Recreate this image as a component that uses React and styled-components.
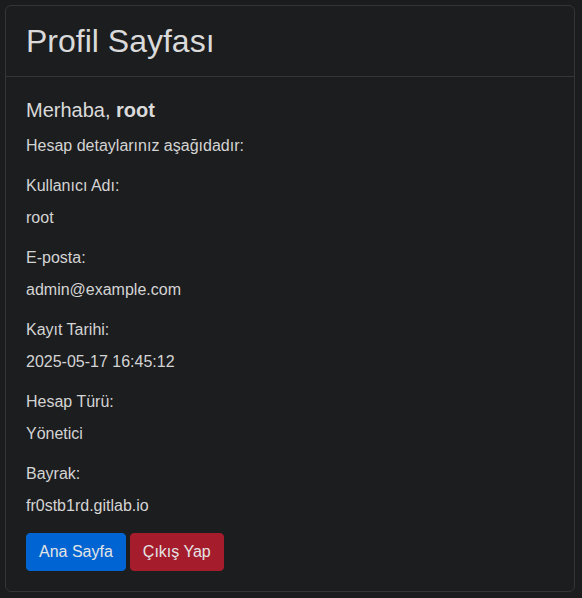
import React from 'react';
import styled, { createGlobalStyle } from 'styled-components';

const GlobalStyle = createGlobalStyle`
    * { box-sizing: border-box; }
    body {
        margin: 0;
        background: #1b1c1e;
        color: #d4d4d4;
        font-family: "Liberation Sans", Arial, sans-serif;
        font-size: 16px;
        line-height: 1.5;
    }
`;

const Card = styled.div`
    margin: 5px;
    width: 570px;
    background: #1c1d1f;
    border: 1px solid #333538;
    border-radius: 6px;
`;

const CardHeader = styled.div`
    padding: 16px 20px;
    border-bottom: 1px solid #333538;

    h1 {
        margin: 0;
        font-size: 32px;
        font-weight: 400;
        line-height: 1.2;
        color: #dadada;
    }
`;

const CardBody = styled.div`
    padding: 21px 20px 20px;
`;

const Greeting = styled.h4`
    margin: 0 0 12px;
    font-size: 20px;
    font-weight: 400;
    line-height: 1.2;
    color: #dadada;
`;

const Text = styled.p`
    margin: 0 0 ${(p) => (p.$tight ? '8px' : '16px')};
`;

const Actions = styled.div`
    display: flex;
    gap: 4px;
    margin-top: -1px;
`;

const Button = styled.a`
    display: inline-block;
    padding: 6px 12px;
    font-size: 16px;
    line-height: 24px;
    border: 1px solid ${(p) => (p.$variant === 'danger' ? '#a51d2d' : '#0064d2')};
    border-radius: 4px;
    background: ${(p) => (p.$variant === 'danger' ? '#a51d2d' : '#0064d2')};
    color: #e4e4e4;
    text-decoration: none;
    cursor: pointer;
`;

const details = [
    { label: 'Kullanıcı Adı:', value: 'root' },
    { label: 'E-posta:', value: 'admin@example.com' },
    { label: 'Kayıt Tarihi:', value: '2025-05-17 16:45:12' },
    { label: 'Hesap Türü:', value: 'Yönetici' },
    { label: 'Bayrak:', value: 'fr0stb1rd.gitlab.io' },
];

const App = () => {
    return (
        <>
            <GlobalStyle />
            <Card>
                <CardHeader>
                    <h1>Profil Sayfası</h1>
                </CardHeader>
                <CardBody>
                    <Greeting>Merhaba, <strong>root</strong></Greeting>
                    <Text>Hesap detaylarınız aşağıdadır:</Text>
                    {details.map((d) => (
                        <React.Fragment key={d.label}>
                            <Text $tight>{d.label}</Text>
                            <Text>{d.value}</Text>
                        </React.Fragment>
                    ))}
                    <Actions>
                        <Button href="#">Ana Sayfa</Button>
                        <Button href="#" $variant="danger">Çıkış Yap</Button>
                    </Actions>
                </CardBody>
            </Card>
        </>
    );
};

export default App;
